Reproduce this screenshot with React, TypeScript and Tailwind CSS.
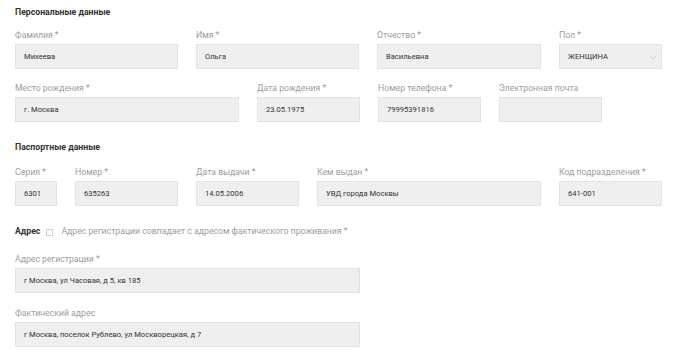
import React from 'react';

type Field = { label: string; value: string; w: string; select?: boolean };

const personalTop: Field[] = [
  { label: 'Фамилия *', value: 'Михеева', w: 'w-[163px]' },
  { label: 'Имя *', value: 'Ольга', w: 'w-[163px]' },
  { label: 'Отчество *', value: 'Васильевна', w: 'w-[164px]' },
  { label: 'Пол *', value: 'ЖЕНЩИНА', w: 'w-[103px]', select: true },
];

const personalBottom: Field[] = [
  { label: 'Место рождения *', value: 'г. Москва', w: 'w-[224px]' },
  { label: 'Дата рождения *', value: '23.05.1975', w: 'w-[103px]' },
  { label: 'Номер телефона *', value: '79995391816', w: 'w-[103px]' },
  { label: 'Электронная почта', value: '', w: 'w-[103px]' },
];

const passport: Field[] = [
  { label: 'Серия *', value: '6301', w: 'w-[42px]' },
  { label: 'Номер *', value: '635263', w: 'w-[103px]' },
  { label: 'Дата выдачи *', value: '14.05.2006', w: 'w-[103px]' },
  { label: 'Кем выдан *', value: 'УВД города Москвы', w: 'w-[224px]' },
  { label: 'Код подразделения *', value: '641-001', w: 'w-[103px]' },
];

const Chevron = () => (
  <svg width="8" height="5" viewBox="0 0 8 5" fill="none" className="absolute right-[4px] top-[10px]">
    <path d="M0.5 0.5L4 4L7.5 0.5" stroke="#c4c4c4" strokeWidth="0.8" />
  </svg>
);

const FieldBox: React.FC<{ f: Field }> = ({ f }) => (
  <div className={`${f.w} shrink-0`}>
    <div className="text-[8.7px] leading-[12px] text-[#9d9d9d] whitespace-nowrap mb-[3px]">{f.label}</div>
    <div className="relative h-[25px] bg-[#efefef] border border-[#e3e3e3] pl-[8px] flex items-center text-[7.6px] text-[#333] whitespace-nowrap overflow-hidden">
      {f.value}
      {f.select && <Chevron />}
    </div>
  </div>
);

const Row: React.FC<{ fields: Field[] }> = ({ fields }) => (
  <div className="flex gap-[18px]">
    {fields.map((f) => (
      <FieldBox key={f.label} f={f} />
    ))}
  </div>
);

const Title: React.FC<{ children: React.ReactNode }> = ({ children }) => (
  <h3 className="text-[8.7px] leading-[12px] font-bold text-[#333]">{children}</h3>
);

export default function App() {
  return (
    <div className="w-[700px] h-[358px] bg-white overflow-hidden pl-[15px] pt-[6px]" style={{ fontFamily: 'Roboto, "Noto Sans", sans-serif' }}>
      <Title>Персональные данные</Title>
      <div className="mt-[11px]">
        <Row fields={personalTop} />
      </div>
      <div className="mt-[13px]">
        <Row fields={personalBottom} />
      </div>
      <div className="mt-[19px]">
        <Title>Паспортные данные</Title>
      </div>
      <div className="mt-[13px]">
        <Row fields={passport} />
      </div>
      <div className="mt-[20px] flex items-center h-[12px] text-[8.7px]">
        <span className="font-bold text-[#333]">Адрес</span>
        <span className="ml-[6px] w-[7px] h-[7px] border border-[#cfcfcf] bg-white" />
        <span className="ml-[8px] text-[#9d9d9d]">Адрес регистрации совпадает с адресом фактического проживания *</span>
      </div>
      <div className="mt-[15px]">
        <Row fields={[{ label: 'Адрес регистрации *', value: 'г Москва, ул Часовая, д 5, кв 185', w: 'w-[345px]' }]} />
      </div>
      <div className="mt-[14px]">
        <Row fields={[{ label: 'Фактический адрес', value: 'г Москва, поселок Рублево, ул Москворецкая, д 7', w: 'w-[345px]' }]} />
      </div>
    </div>
  );
}
